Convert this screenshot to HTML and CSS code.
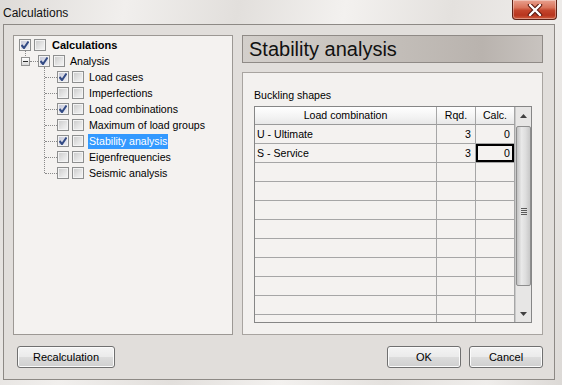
FILE: index.html
```html
<!DOCTYPE html>
<html>
<head>
<meta charset="utf-8">
<link rel="stylesheet" href="styles.css">
</head>
<body>
<div class="window">
  <div class="titlebar">
    <span class="title">Calculations</span>
    <div class="close">
      <svg width="16" height="12" viewBox="0 0 16 12"><path d="M3 1 L13 11 M13 1 L3 11" stroke="#5a1a10" stroke-width="4.4" stroke-linecap="round"/><path d="M3 1 L13 11 M13 1 L3 11" stroke="#ffffff" stroke-width="2.4" stroke-linecap="round"/></svg>
    </div>
  </div>
  <div class="client">
    <div class="main">
      <div class="tree-panel">
        <div class="tree">
          <div class="row lvl0">
            <span class="cb checked"></span><span class="cb"></span><span class="label bold">Calculations</span>
          </div>
          <div class="row lvl1">
            <span class="expander"></span><span class="cb checked"></span><span class="cb"></span><span class="label">Analysis</span>
          </div>
          <div class="children">
            <div class="row lvl2"><span class="cb checked"></span><span class="cb"></span><span class="label">Load cases</span></div>
            <div class="row lvl2"><span class="cb"></span><span class="cb"></span><span class="label">Imperfections</span></div>
            <div class="row lvl2"><span class="cb checked"></span><span class="cb"></span><span class="label">Load combinations</span></div>
            <div class="row lvl2"><span class="cb"></span><span class="cb"></span><span class="label">Maximum of load groups</span></div>
            <div class="row lvl2"><span class="cb checked"></span><span class="cb"></span><span class="label selected">Stability analysis</span></div>
            <div class="row lvl2"><span class="cb"></span><span class="cb"></span><span class="label">Eigenfrequencies</span></div>
            <div class="row lvl2"><span class="cb"></span><span class="cb"></span><span class="label">Seismic analysis</span></div>
          </div>
        </div>
      </div>
      <div class="right">
        <div class="page-header">Stability analysis</div>
        <div class="page">
          <div class="group-label">Buckling shapes</div>
          <div class="grid">
            <div class="table">
              <div class="trow head">
                <div class="cell c1">Load combination</div>
                <div class="cell c2">Rqd.</div>
                <div class="cell c3">Calc.</div>
              </div>
              <div class="trow">
                <div class="cell c1 left">U - Ultimate</div>
                <div class="cell c2 num">3</div>
                <div class="cell c3 num">0</div>
              </div>
              <div class="trow">
                <div class="cell c1 left">S - Service</div>
                <div class="cell c2 num">3</div>
                <div class="cell c3 num focus">0</div>
              </div>
              <div class="trow"><div class="cell c1"></div><div class="cell c2"></div><div class="cell c3"></div></div>
              <div class="trow"><div class="cell c1"></div><div class="cell c2"></div><div class="cell c3"></div></div>
              <div class="trow"><div class="cell c1"></div><div class="cell c2"></div><div class="cell c3"></div></div>
              <div class="trow"><div class="cell c1"></div><div class="cell c2"></div><div class="cell c3"></div></div>
              <div class="trow"><div class="cell c1"></div><div class="cell c2"></div><div class="cell c3"></div></div>
              <div class="trow"><div class="cell c1"></div><div class="cell c2"></div><div class="cell c3"></div></div>
              <div class="trow"><div class="cell c1"></div><div class="cell c2"></div><div class="cell c3"></div></div>
              <div class="trow"><div class="cell c1"></div><div class="cell c2"></div><div class="cell c3"></div></div>
              <div class="trow"><div class="cell c1"></div><div class="cell c2"></div><div class="cell c3"></div></div>
            </div>
            <div class="scrollbar">
              <div class="sb-btn">
                <svg width="7" height="4" viewBox="0 0 7 4"><path d="M0 4 L3.5 0 L7 4 Z" fill="#404040"/></svg>
              </div>
              <div class="sb-track">
                <div class="thumb">
                  <div class="grip"><span></span><span></span><span></span><span></span></div>
                </div>
              </div>
              <div class="sb-btn down">
                <svg width="7" height="4" viewBox="0 0 7 4"><path d="M0 0 L7 0 L3.5 4 Z" fill="#404040"/></svg>
              </div>
            </div>
          </div>
        </div>
      </div>
    </div>
    <div class="buttons">
      <button class="btn recalc">Recalculation</button>
      <div class="spacer"></div>
      <button class="btn">OK</button>
      <button class="btn">Cancel</button>
    </div>
  </div>
</div>
</body>
</html>
```

FILE: styles.css
```css
* { box-sizing: border-box; }
html, body { margin: 0; padding: 0; }
body {
  width: 562px;
  height: 385px;
  overflow: hidden;
  font-family: "Liberation Sans", Arial, sans-serif;
  font-size: 11px;
  color: #000;
}
.window {
  width: 562px;
  height: 385px;
  background: linear-gradient(100deg, #dedbd8 0%, #f1efed 20%, #e2dfdc 38%, #f3f1ef 55%, #e4e1de 72%, #efedeb 88%, #dcd9d6 100%);
  display: flex;
  flex-direction: column;
}
.titlebar {
  height: 24px;
  display: flex;
  align-items: flex-start;
  position: relative;
}
.title {
  font-family: "Liberation Sans", Arial, sans-serif;
  font-size: 12px;
  padding-left: 3px;
  padding-top: 6px;
  color: #111;
}
.close {
  position: absolute;
  left: 512px;
  top: 0;
  width: 45px;
  height: 20px;
  border: 1px solid #5e2317;
  border-top: none;
  border-radius: 0 0 4px 4px;
  background: linear-gradient(180deg, #e9a18f 0%, #d9735a 40%, #c3452c 55%, #b8351e 80%, #cf5d3e 100%);
  display: flex;
  align-items: center;
  justify-content: center;
  box-shadow: inset 0 0 0 1px rgba(255,255,255,0.35);
}
.client {
  margin-left: 3px;
  width: 552px;
  height: 356px;
  border: 1px solid #8d8985;
  background: #e1dedb;
  padding: 10px 11px 11px 9px;
  display: flex;
  flex-direction: column;
  gap: 11px;
}
.main {
  height: 300px;
  display: flex;
  gap: 9px;
}
.tree-panel {
  width: 220px;
  height: 300px;
  border: 1px solid #9c9894;
  background: #f4f2f0;
  padding-top: 1px;
  font-size: 10.6px;
}
.tree { position: relative; }
.row {
  height: 16px;
  display: flex;
  align-items: center;
  position: relative;
}
.lvl0 { padding-left: 5px; }
.lvl1 { padding-left: 7px; }
.lvl2 { padding-left: 43px; }
.cb {
  width: 12px;
  height: 12px;
  border: 1px solid #8e8f8f;
  background: linear-gradient(135deg, #c9c9c9 0%, #e6e6e6 60%, #f6f6f6 100%);
  margin-right: 3px;
  box-shadow: inset 0 0 0 1px #f3f3f3;
  flex: none;
}
.cb.checked {
  background:
    url("data:image/svg+xml;utf8,<svg xmlns='http://www.w3.org/2000/svg' width='10' height='10'><path d='M1.5 5 L4 8 L8.5 1.5' stroke='%23324a84' stroke-width='2' fill='none'/></svg>") center/10px 10px no-repeat,
    linear-gradient(135deg, #c4c6d6 0%, #e0e1ea 60%, #f2f2f6 100%);
}
.label {
  margin-left: 1px;
  padding: 1px 1px;
  line-height: 13px;
  white-space: nowrap;
}
.bold { font-weight: bold; font-size: 11px; margin-left: 2px; }
.selected {
  background: #3399ff;
  color: #fff;
}
.expander {
  width: 9px;
  height: 9px;
  border: 1px solid #919191;
  background: linear-gradient(180deg, #ffffff, #d8d8d8);
  margin-right: 8px;
  position: relative;
  flex: none;
}
.expander::after {
  content: "";
  position: absolute;
  left: 1px;
  top: 3px;
  width: 5px;
  height: 1px;
  background: #2a2a2a;
}
.lvl1::before {
  content: "";
  position: absolute;
  left: 11px;
  top: -3px;
  height: 6px;
  border-left: 1px dotted #8a8a8a;
}
.lvl1 .expander::before {
  content: "";
  position: absolute;
  left: 8px;
  top: 3px;
  width: 8px;
  border-top: 1px dotted #8a8a8a;
}
.children { position: relative; }
.children::before {
  content: "";
  position: absolute;
  left: 30px;
  top: -2px;
  height: 106px;
  border-left: 1px dotted #8a8a8a;
}
.lvl2::before {
  content: "";
  position: absolute;
  left: 31px;
  top: 8px;
  width: 12px;
  border-top: 1px dotted #8a8a8a;
}

.right {
  width: 301px;
  display: flex;
  flex-direction: column;
  gap: 9px;
}
.page-header {
  height: 28px;
  border: 1px solid #8f8a86;
  background: linear-gradient(90deg, #d3cfcb 0%, #c3beb9 50%, #b9b3ae 80%, #c8c3bf 100%);
  font-family: "Liberation Sans", Arial, sans-serif;
  font-size: 20px;
  line-height: 26px;
  padding-left: 6px;
  color: #111;
}
.page {
  flex: 1;
  border: 1px solid #a8a4a0;
  background: #f3f1ef;
  padding: 16px 9px 0 11px;
}
.group-label {
  line-height: 13px;
  margin-bottom: 4px;
  font-size: 10.6px;
}
.grid {
  width: 278px;
  height: 217px;
  border: 1px solid #868686;
  background: #f4f2f0;
  display: flex;
  font-size: 10.6px;
}
.table {
  width: 260px;
  height: 215px;
  overflow: hidden;
}
.trow {
  display: grid;
  grid-template-columns: 182px 39px 39px;
  height: 19px;
}
.trow.head {
  height: 18px;
  background: linear-gradient(180deg, #ffffff 0%, #f4f4f4 50%, #e7e7e7 100%);
}
.cell {
  border-right: 1px solid #a6a6a6;
  border-bottom: 1px solid #a6a6a6;
  line-height: 18px;
  padding: 0 3px;
  white-space: nowrap;
}
.head .cell { text-align: center; line-height: 17px; border-bottom-color: #9a9a9a; }
.left { padding-left: 2px; }
.num { text-align: right; padding-right: 4px; }
.focus { box-shadow: inset 0 0 0 2px #000; padding-right: 4px; }

.scrollbar {
  width: 16px;
  height: 215px;
  background: #e7e6e5;
  border-left: 1px solid #c9c9c9;
  display: flex;
  flex-direction: column;
}
.sb-btn {
  height: 17px;
  display: flex;
  align-items: center;
  justify-content: center;
  flex: none;
}
.sb-track {
  flex: 1;
  padding: 2px 0 0 0;
}
.thumb {
  height: 160px;
  border: 1px solid #8e8e8e;
  border-radius: 2px;
  background: linear-gradient(90deg, #c2c2c2 0%, #e9e9e9 35%, #dedede 65%, #c8c8c8 100%);
  display: flex;
  align-items: center;
  justify-content: center;
}
.grip {
  display: flex;
  flex-direction: column;
  gap: 1px;
  margin-top: 10px;
}
.grip span {
  width: 6px;
  height: 1px;
  background: #5a5a5a;
}

.buttons {
  height: 22px;
  display: flex;
  gap: 8px;
  padding-left: 4px;
}
.spacer { flex: 1; }
.btn {
  width: 74px;
  height: 22px;
  border: 1px solid #707070;
  border-radius: 3px;
  background: linear-gradient(180deg, #f4f4f4 0%, #ebebeb 48%, #dcdcdc 52%, #cfcfcf 100%);
  box-shadow: inset 0 0 0 1px #fbfbfb;
  font-family: "Liberation Sans", Arial, sans-serif;
  font-size: 11px;
  color: #000;
  padding: 0;
}
.btn.recalc { width: 98px; }
```
